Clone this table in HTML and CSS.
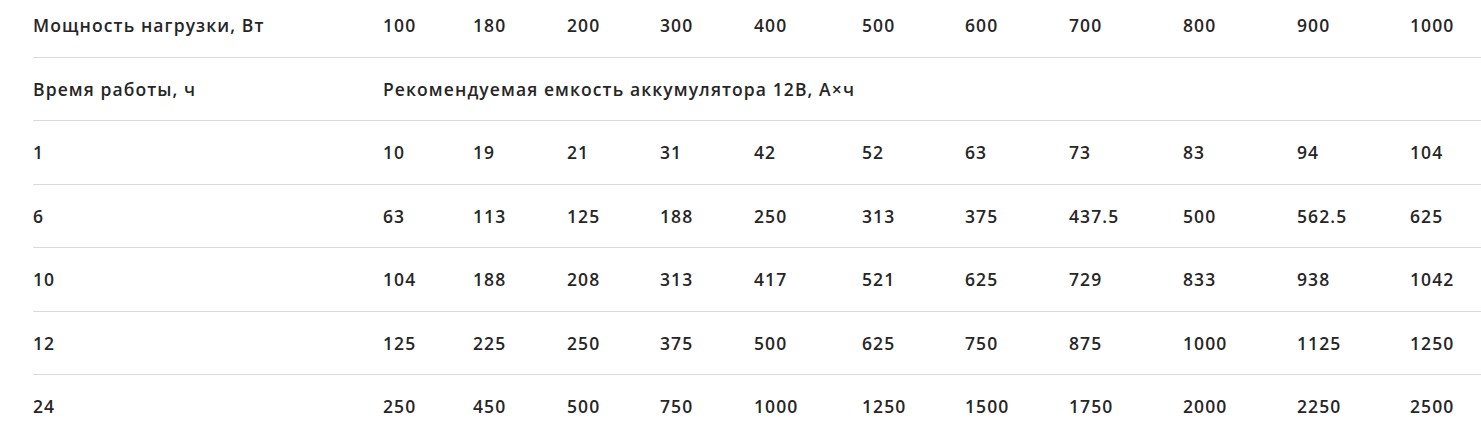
FILE: index.html
```html
<!DOCTYPE html>
<html lang="ru">
<head>
<meta charset="utf-8">
<title>Емкость аккумулятора</title>
<link rel="stylesheet" href="styles.css">
</head>
<body>
<div class="wrap">
<table class="spec">
  <colgroup>
    <col class="c0"><col class="c1"><col class="c2"><col class="c3"><col class="c4"><col class="c5"><col class="c6"><col class="c7"><col class="c8"><col class="c9"><col class="c10"><col class="c11">
  </colgroup>
  <tbody>
    <tr><td>Мощность нагрузки, Вт</td><td>100</td><td>180</td><td>200</td><td>300</td><td>400</td><td>500</td><td>600</td><td>700</td><td>800</td><td>900</td><td>1000</td></tr>
    <tr><td>Время работы, ч</td><td colspan="11">Рекомендуемая емкость аккумулятора 12В, А×ч</td></tr>
    <tr><td>1</td><td>10</td><td>19</td><td>21</td><td>31</td><td>42</td><td>52</td><td>63</td><td>73</td><td>83</td><td>94</td><td>104</td></tr>
    <tr><td>6</td><td>63</td><td>113</td><td>125</td><td>188</td><td>250</td><td>313</td><td>375</td><td>437.5</td><td>500</td><td>562.5</td><td>625</td></tr>
    <tr><td>10</td><td>104</td><td>188</td><td>208</td><td>313</td><td>417</td><td>521</td><td>625</td><td>729</td><td>833</td><td>938</td><td>1042</td></tr>
    <tr><td>12</td><td>125</td><td>225</td><td>250</td><td>375</td><td>500</td><td>625</td><td>750</td><td>875</td><td>1000</td><td>1125</td><td>1250</td></tr>
    <tr><td>24</td><td>250</td><td>450</td><td>500</td><td>750</td><td>1000</td><td>1250</td><td>1500</td><td>1750</td><td>2000</td><td>2250</td><td>2500</td></tr>
  </tbody>
</table>
</div>
</body>
</html>
```
FILE: styles.css
```css
html, body {
  margin: 0;
  padding: 0;
  background: #ffffff;
}
body {
  font-family: "Open Sans", "DejaVu Sans", sans-serif;
  color: #262626;
  overflow: hidden;
}
.wrap {
  padding-left: 33px;
  overflow: hidden;
}
.spec {
  border-collapse: collapse;
  table-layout: fixed;
  width: 1448px;
  margin-top: -6px;
}
.spec td {
  height: 62.5px;
  padding: 0;
  vertical-align: middle;
  white-space: nowrap;
  font-size: 17.5px;
  font-weight: 600;
  letter-spacing: 1.1px;
  border-bottom: 1px solid #dadada;
  text-align: left;
}
.spec tr:last-child td { border-bottom: none; }
.c0 { width: 350px; }
.c1 { width: 90px; }
.c2 { width: 94px; }
.c3 { width: 93px; }
.c4 { width: 94px; }
.c5 { width: 108px; }
.c6 { width: 103px; }
.c7 { width: 104px; }
.c8 { width: 114px; }
.c9 { width: 114px; }
.c10 { width: 113px; }
.c11 { width: 71px; }
```
